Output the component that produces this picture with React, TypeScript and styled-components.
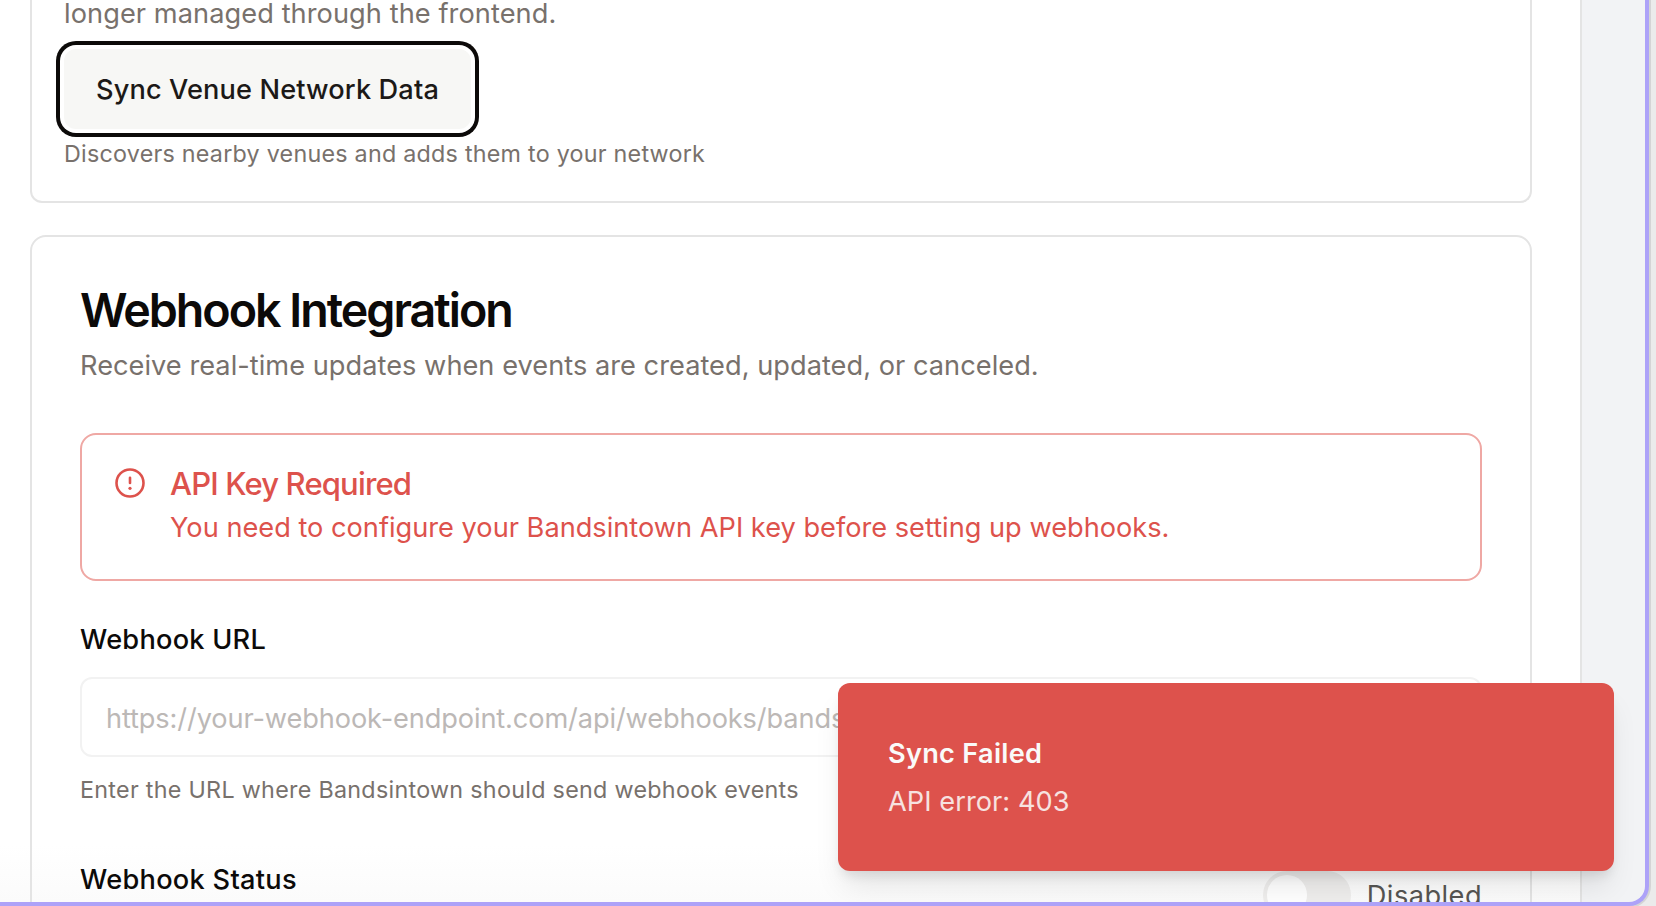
import React from "react";
import styled, { createGlobalStyle } from "styled-components";

const GlobalStyle = createGlobalStyle`
  *, *::before, *::after { box-sizing: border-box; }
  body {
    margin: 0;
    background: #ebebeb;
    font-family: Inter, "Liberation Sans", sans-serif;
    color: #0c0a09;
    overflow: hidden;
  }
  h2, h5, p { margin: 0; }
`;

const Desktop = styled.div`
  height: 906px;
  overflow: hidden;
`;

const Window = styled.div`
  position: relative;
  width: 1649px;
  height: 906px;
  border-right: 4px solid #ada2f8;
  border-bottom: 4px solid #ada2f8;
  border-bottom-right-radius: 20px;
  box-shadow: 0 0 0 2px #d4d4d5;
  background: #f2f3f5;
  overflow: hidden;
`;

const Panel = styled.main`
  display: flex;
  flex-direction: column;
  gap: 32px;
  width: 1582px;
  height: 902px;
  padding: 0 48px 0 30px;
  overflow: hidden;
  background: linear-gradient(#fff 0, #fff 845px, #fbfbfb 902px);
  border-right: 2px solid #e4e4e4;
`;

const Card = styled.section<{ $inset: number; $radius: number }>`
  flex: none;
  border: 2px solid #e4e4e4;
  border-radius: ${(p) => p.$radius}px;
  padding: ${(p) => p.$inset}px;
`;

const SyncCard = styled(Card)`
  height: 203px;
  display: flex;
  flex-direction: column;
  align-items: flex-start;
  justify-content: flex-end;
  border-top: 0;
  border-top-left-radius: 0;
  border-top-right-radius: 0;
`;

const Text = styled.p<{ $tracking?: number }>`
  padding-top: 2px;
  font-size: 27.2px;
  line-height: 38px;
  letter-spacing: ${(p) => p.$tracking ?? 0}px;
  color: #78716c;
  white-space: nowrap;
`;

const Hint = styled(Text)`
  font-size: 23.3px;
  line-height: 30px;
`;

const SyncButton = styled.button`
  flex: none;
  width: 407px;
  height: 80px;
  margin: 16px 0 8px;
  padding: 2px 0 0;
  border: 0;
  border-radius: 12px;
  background: #f7f7f5;
  box-shadow: 0 0 0 4px #fff, 0 0 0 8px #0c0a09;
  color: #1c1917;
  font: 500 27.2px/40px Inter, "Liberation Sans", sans-serif;
  letter-spacing: 0.12px;
`;

const CardTitle = styled.h2`
  margin-bottom: 11px;
  padding-top: 1px;
  font-size: 46.6px;
  line-height: 48px;
  font-weight: 600;
  letter-spacing: -2px;
`;

const Alert = styled.div`
  display: flex;
  gap: 24px;
  height: 148px;
  margin: 48px 0 44px;
  padding: 32px;
  border: 2px solid #efa8a4;
  border-radius: 16px;
  color: #dd524c;
`;

const AlertIcon = styled.svg`
  flex: none;
  width: 32px;
  height: 32px;
`;

const AlertTitle = styled.h5`
  margin-bottom: 8px;
  padding-top: 2px;
  font-size: 31px;
  line-height: 30px;
  font-weight: 500;
  letter-spacing: -0.845px;
`;

const AlertText = styled(Text)`
  color: #dd524c;
`;

const Label = styled.label<{ $tracking: number }>`
  display: block;
  padding-top: 2px;
  font-size: 27.2px;
  line-height: 26px;
  font-weight: 500;
  letter-spacing: ${(p) => p.$tracking}px;
`;

const UrlInput = styled.input`
  display: block;
  width: 100%;
  height: 80px;
  margin: 24px 0 16px;
  padding: 2px 24px 0;
  border: 2px solid #f2f2f2;
  border-radius: 12px;
  background: transparent;
  font: 400 27.2px/40px Inter, "Liberation Sans", sans-serif;
  letter-spacing: -0.12px;
  &::placeholder { color: #bcb8b6; opacity: 1; }
`;

const StatusRow = styled.div`
  display: flex;
  justify-content: space-between;
  align-items: flex-start;
  margin-top: 60px;
`;

const StatusControl = styled.div`
  display: flex;
  align-items: center;
  gap: 16px;
  padding-top: 6px;
`;

const Switch = styled.span`
  display: flex;
  width: 88px;
  height: 48px;
  padding: 4px;
  border-radius: 24px;
  background: #efeeed;
`;

const Thumb = styled.span`
  width: 40px;
  height: 40px;
  border-radius: 50%;
  background: #fff;
`;

const StatusText = styled(Text)`
  color: #565553;
`;

const Toast = styled.div`
  position: absolute;
  left: 838px;
  top: 683px;
  width: 776px;
  height: 188px;
  padding: 50px;
  display: flex;
  flex-direction: column;
  gap: 8px;
  border-radius: 12px;
  background: #dd524c;
  box-shadow: 0 20px 30px -6px rgba(0, 0, 0, 0.1), 0 8px 12px -4px rgba(0, 0, 0, 0.1);
`;

const ToastTitle = styled(Text)`
  font-weight: 600;
  color: #fafaf9;
`;

const ToastText = styled(Text)`
  color: #f7e2e0;
`;

export default function App() {
  return (
    <Desktop>
      <GlobalStyle />
      <Window>
        <Panel>
          <SyncCard $inset={32} $radius={12}>
            <Text $tracking={0.07}>longer managed through the frontend.</Text>
            <SyncButton>Sync Venue Network Data</SyncButton>
            <Hint $tracking={0.24}>Discovers nearby venues and adds them to your network</Hint>
          </SyncCard>

          <Card $inset={48} $radius={16}>
            <CardTitle>Webhook Integration</CardTitle>
            <Text $tracking={0.03}>
              Receive real-time updates when events are created, updated, or canceled.
            </Text>

            <Alert>
              <AlertIcon viewBox="0 0 32 32" fill="none" stroke="currentColor">
                <circle cx="16" cy="16" r="13.5" strokeWidth="2.6" />
                <path d="M16 10.8v5.2" strokeWidth="2.6" strokeLinecap="round" />
                <circle cx="16" cy="21.3" r="1.6" fill="currentColor" stroke="none" />
              </AlertIcon>
              <div>
                <AlertTitle>API Key Required</AlertTitle>
                <AlertText>
                  You need to configure your Bandsintown API key before setting up webhooks.
                </AlertText>
              </div>
            </Alert>

            <Label htmlFor="webhook-url" $tracking={0.24}>Webhook URL</Label>
            <UrlInput
              id="webhook-url"
              placeholder="https://your-webhook-endpoint.com/api/webhooks/bandsintown"
            />
            <Hint $tracking={0.29}>
              Enter the URL where Bandsintown should send webhook events
            </Hint>

            <StatusRow>
              <Label as="span" $tracking={0.28}>Webhook Status</Label>
              <StatusControl>
                <Switch>
                  <Thumb />
                </Switch>
                <StatusText $tracking={0.46}>Disabled</StatusText>
              </StatusControl>
            </StatusRow>
          </Card>
        </Panel>

        <Toast role="status">
          <ToastTitle $tracking={0.262}>Sync Failed</ToastTitle>
          <ToastText $tracking={0.05}>API error: 403</ToastText>
        </Toast>
      </Window>
    </Desktop>
  );
}
